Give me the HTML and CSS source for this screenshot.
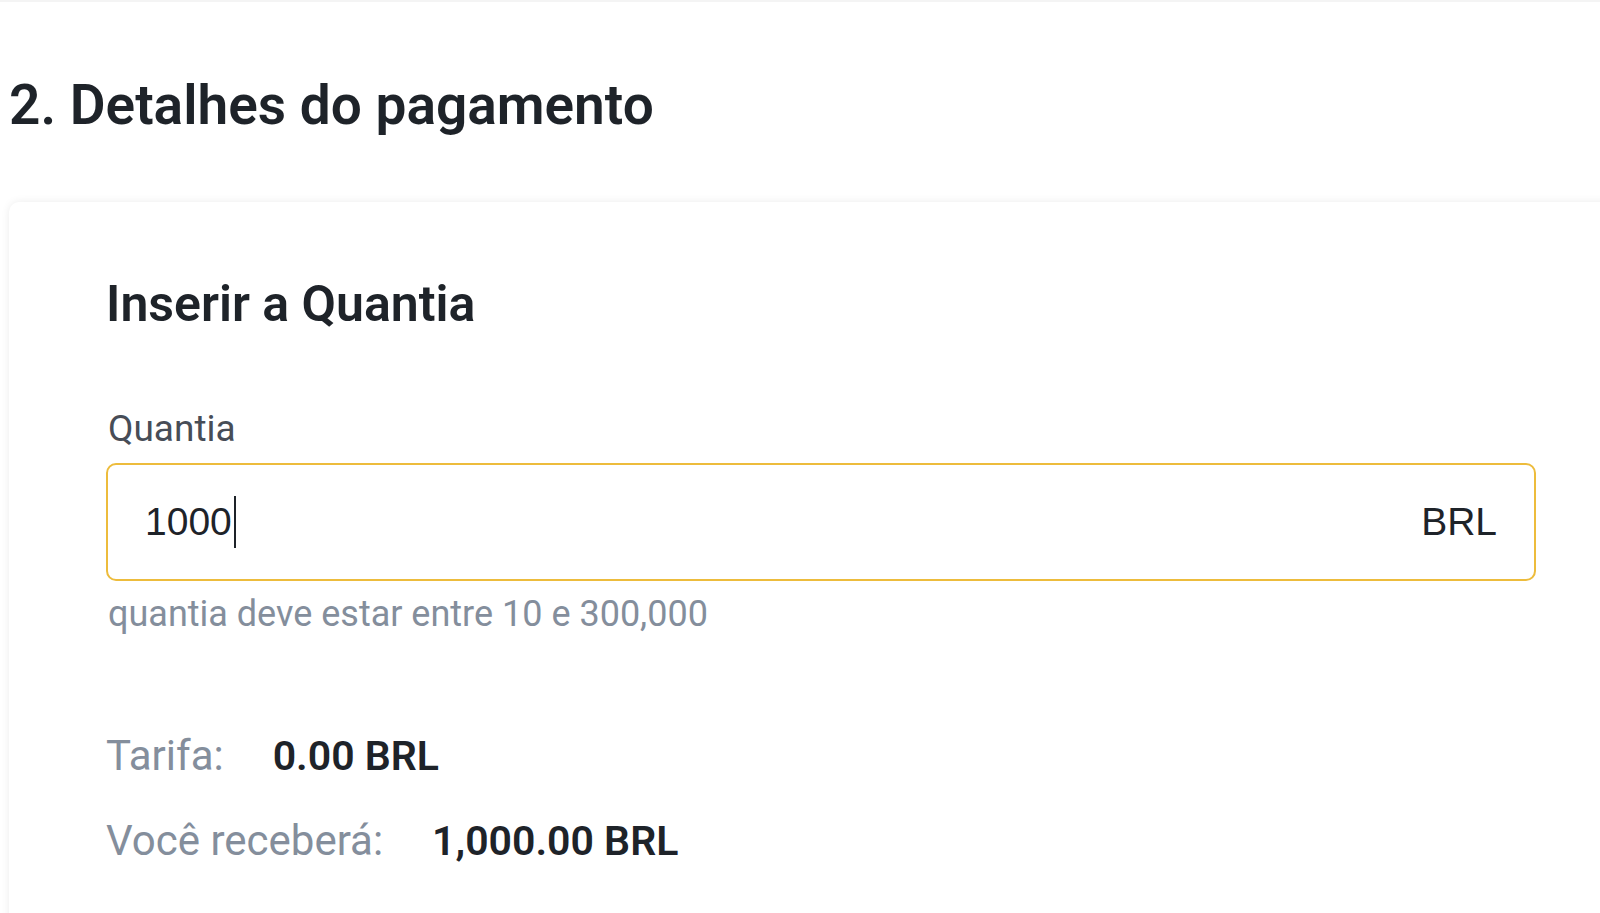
FILE: index.html
```html
<!DOCTYPE html>
<html lang="pt-BR">
<head>
<meta charset="utf-8">
<title>Detalhes do pagamento</title>
<link rel="stylesheet" href="styles.css">
</head>
<body>
<div class="page">
  <h1 class="page-title">2. Detalhes do pagamento</h1>
  <section class="card">
    <h2 class="card-title">Inserir a Quantia</h2>
    <div class="field">
      <label class="field-label">Quantia</label>
      <div class="input">
        <span class="input-value">1000<span class="caret"></span></span>
        <span class="input-suffix">BRL</span>
      </div>
      <div class="field-hint">quantia deve estar entre 10 e 300,000</div>
    </div>
    <div class="summary">
      <div class="summary-row"><span class="summary-label">Tarifa:</span><span class="summary-value">0.00 BRL</span></div>
      <div class="summary-row"><span class="summary-label">Você receberá:</span><span class="summary-value">1,000.00 BRL</span></div>
    </div>
  </section>
</div>
</body>
</html>
```

FILE: styles.css
```css
* { box-sizing: border-box; }
html, body {
  margin: 0;
  padding: 0;
  background: #ffffff;
  overflow: hidden;
  height: 913px;
}
body {
  font-family: Roboto, "Noto Sans", Arial, sans-serif;
  color: #1E2329;
}
.page {
  border-top: 2px solid #f4f4f4;
  padding: 71px 0 0 9px;
  width: 1640px;
}
.page-title {
  margin: 0;
  font-size: 55px;
  line-height: 64px;
  font-weight: 600;
  color: #1E2329;
}
.card {
  margin-top: 65px;
  background: #fff;
  border-radius: 10px;
  box-shadow: 0 0 8px rgba(0, 0, 0, 0.08);
  padding: 76px 0 80px 97px;
}
.card-title {
  margin: 0;
  font-size: 50px;
  line-height: 52px;
  font-weight: 600;
  color: #1E2329;
}
.field {
  margin-top: 79px;
  width: 1430px;
  display: flex;
  flex-direction: column;
}
.field-label {
  font-size: 37px;
  line-height: 40px;
  color: #474D57;
  padding-left: 2px;
}
.input {
  margin-top: 14px;
  height: 118px;
  border: 2px solid #EDBC3C;
  border-radius: 10px;
  display: flex;
  align-items: center;
  justify-content: space-between;
  padding: 0 37px 0 37px;
}
.input-value {
  font-family: "Liberation Sans", Arial, sans-serif;
  font-size: 39px;
  color: #1E2329;
  display: flex;
  align-items: center;
}
.caret {
  display: inline-block;
  width: 2px;
  height: 52px;
  background: #1E2329;
  margin-left: 2px;
}
.input-suffix {
  font-family: "Liberation Sans", Arial, sans-serif;
  font-size: 39px;
  color: #1E2329;
}
.field-hint {
  margin-top: 13px;
  font-size: 36px;
  line-height: 40px;
  color: #848E9C;
  padding-left: 2px;
}
.summary {
  margin-top: 97px;
  display: flex;
  flex-direction: column;
  gap: 35px;
}
.summary-row {
  display: flex;
  align-items: center;
  line-height: 50px;
  font-size: 42px;
}
.summary-label {
  color: #848E9C;
  margin-right: 49px;
}
.summary-value {
  font-size: 41px;
  font-weight: 600;
  color: #1E2329;
}
```
